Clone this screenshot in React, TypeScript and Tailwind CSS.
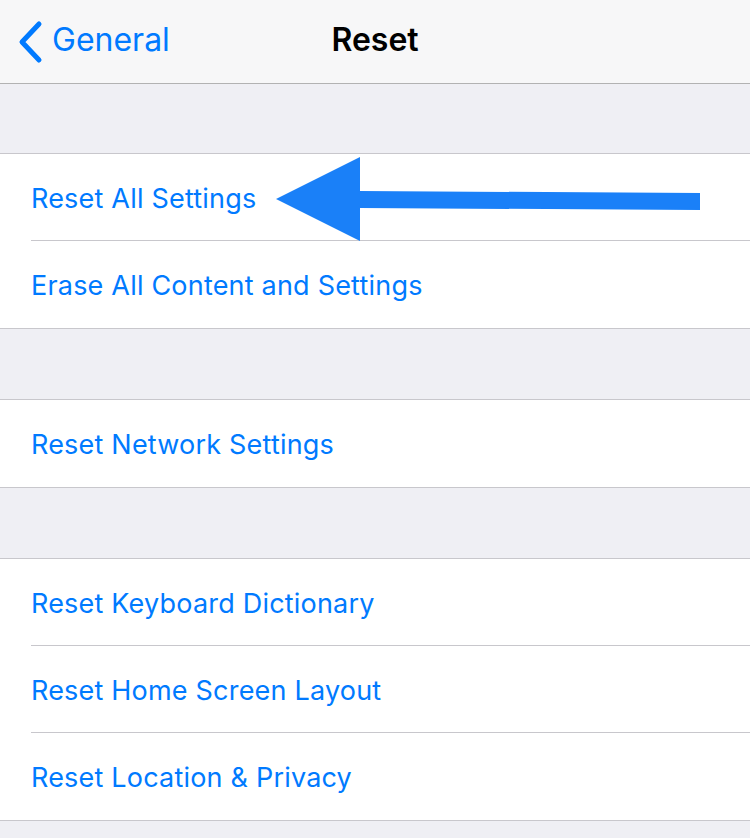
import { ReactNode } from 'react';

const font = { fontFamily: 'Inter, "Liberation Sans", sans-serif' };

function Row({ label, last, children }: { label: string; last?: boolean; children?: ReactNode }) {
  return (
    <div className="relative h-[87px] bg-white pl-[31px]">
      <div className={`flex h-full items-center pt-[4px] ${last ? '' : 'border-b border-[#c8c7cc]'}`}>
        <span className="text-[27px] tracking-[0.2px] text-[#007aff]">{label}</span>
      </div>
      {children}
    </div>
  );
}

function Group({ items, arrowIndex }: { items: string[]; arrowIndex?: number }) {
  return (
    <div className="border-y border-[#c8c7cc]">
      {items.map((item, i) => (
        <Row key={item} label={item} last={i === items.length - 1}>
          {arrowIndex === i && <Arrow />}
        </Row>
      ))}
    </div>
  );
}

function Arrow() {
  return (
    <svg className="absolute left-0 top-0" width="750" height="90" viewBox="0 0 750 90">
      <polygon
        points="276,45 360,3 360,37 700,39 700,56 360,54 360,87"
        fill="#1a80f8"
      />
    </svg>
  );
}

export default function App() {
  return (
    <div className="min-h-[838px] w-[750px] bg-[#efeff4]" style={font}>
      <div className="relative flex h-[84px] items-center border-b border-[#b2b2b2] bg-[#f7f7f8]">
        <div className="flex items-center pl-[17px]">
          <svg width="26" height="44" viewBox="0 0 26 44">
            <path d="M22 4 L5 22 L22 40" fill="none" stroke="#007aff" strokeWidth="5" strokeLinecap="round" strokeLinejoin="round" />
          </svg>
          <span className="ml-[9px] -mt-[3px] text-[32px] text-[#007aff]">General</span>
        </div>
        <span className="absolute left-1/2 -mt-[3px] -translate-x-1/2 text-[32px] font-semibold text-black">Reset</span>
      </div>
      <div className="h-[69px]" />
      <Group items={['Reset All Settings', 'Erase All Content and Settings']} arrowIndex={0} />
      <div className="h-[70px]" />
      <Group items={['Reset Network Settings']} />
      <div className="h-[70px]" />
      <Group items={['Reset Keyboard Dictionary', 'Reset Home Screen Layout', 'Reset Location & Privacy']} />
    </div>
  );
}
